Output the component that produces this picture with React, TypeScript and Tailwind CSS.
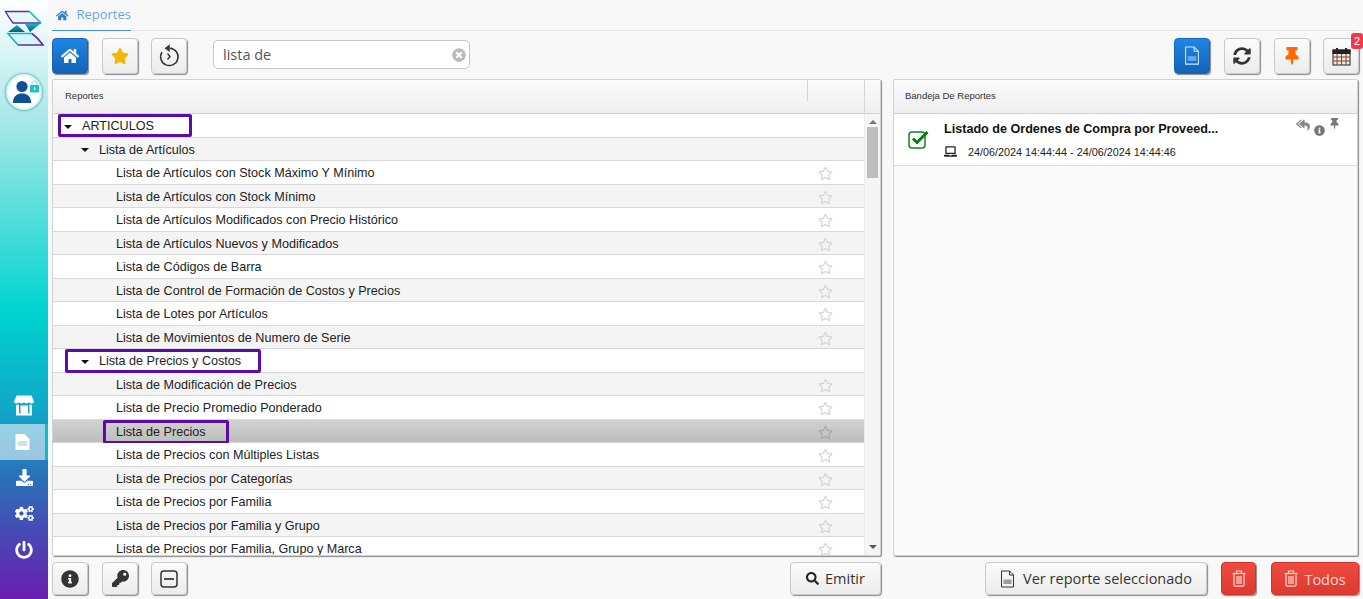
import { ReactNode } from 'react'
import {
  FaCogs,
  FaDownload,
  FaHome,
  FaInfoCircle,
  FaKey,
  FaLaptop,
  FaPowerOff,
  FaRegStar,
  FaReplyAll,
  FaSearch,
  FaStar,
  FaSyncAlt,
  FaThumbtack,
  FaTimesCircle,
} from 'react-icons/fa'

type Row = { label: string; level: 0 | 1 | 2; box?: string; selected?: boolean }

const rows: Row[] = [
  { label: 'ARTICULOS', level: 0, box: 'left-[5px] top-0 h-[23px] w-[134px]' },
  { label: 'Lista de Artículos', level: 1 },
  { label: 'Lista de Artículos con Stock Máximo Y Mínimo', level: 2 },
  { label: 'Lista de Artículos con Stock Mínimo', level: 2 },
  { label: 'Lista de Artículos Modificados con Precio Histórico', level: 2 },
  { label: 'Lista de Artículos Nuevos y Modificados', level: 2 },
  { label: 'Lista de Códigos de Barra', level: 2 },
  { label: 'Lista de Control de Formación de Costos y Precios', level: 2 },
  { label: 'Lista de Lotes por Artículos', level: 2 },
  { label: 'Lista de Movimientos de Numero de Serie', level: 2 },
  { label: 'Lista de Precios y Costos', level: 1, box: 'left-[12px] top-0 h-[24px] w-[196px]' },
  { label: 'Lista de Modificación de Precios', level: 2 },
  { label: 'Lista de Precio Promedio Ponderado', level: 2 },
  { label: 'Lista de Precios', level: 2, selected: true, box: 'left-[50px] top-0 h-[24px] w-[126px]' },
  { label: 'Lista de Precios con Múltiples Listas', level: 2 },
  { label: 'Lista de Precios por Categorías', level: 2 },
  { label: 'Lista de Precios por Familia', level: 2 },
  { label: 'Lista de Precios por Familia y Grupo', level: 2 },
  { label: 'Lista de Precios por Familia, Grupo y Marca', level: 2 },
]

function ToolButton(props: { children: ReactNode; blue?: boolean; className?: string }) {
  const look = props.blue
    ? 'border-[#1565b8] bg-gradient-to-b from-[#1f86e6] to-[#1463b6] text-white'
    : 'border-[#c9c9c9] bg-gradient-to-b from-[#fbfbfb] to-[#ececec]'
  return (
    <button
      className={`flex h-[36px] w-[36px] shrink-0 items-center justify-center rounded-[4px] border shadow-[1px_1px_1px_#8a8a8a] ${look} ${props.className ?? ''}`}
    >
      {props.children}
    </button>
  )
}

function FootButton(props: { children: ReactNode; red?: boolean; className?: string }) {
  const look = props.red
    ? 'border-[#d2332b] bg-gradient-to-b from-[#ee4a40] to-[#dc3a32] text-[#ffd9d4]'
    : 'border-[#c9c9c9] bg-gradient-to-b from-[#fbfbfb] to-[#ececec] text-[#333]'
  return (
    <button
      className={`flex h-[33px] shrink-0 items-center justify-center rounded-[4px] border font-['Open_Sans',sans-serif] text-[14.5px] shadow-[1px_1px_1px_#8a8a8a] ${look} ${props.className ?? ''}`}
    >
      {props.children}
    </button>
  )
}

function Logo() {
  return (
    <svg width="48" height="48" viewBox="0 0 48 48" fill="none">
      <defs>
        <linearGradient id="tealDark" x1="0" y1="0" x2="0" y2="1">
          <stop offset="0" stopColor="#18b4c4" />
          <stop offset="1" stopColor="#0a5a78" />
        </linearGradient>
      </defs>
      <path d="M5 11H29L41 23H13Q9 18 5 11Z" fill="#e6f9fa" />
      <path d="M41 23H13Q9 18 5.5 11.5H29" stroke="#5b2bb0" strokeWidth="1.4" />
      <path d="M29 11L41 23" stroke="#14b7c4" strokeWidth="1.6" />
      <path d="M25 24H40L30 32Z" fill="url(#tealDark)" />
      <path d="M8 32L17 25L25 32Z" fill="url(#tealDark)" />
      <path d="M8 33H32L43 45H18Z" fill="#d8f5f5" />
      <path d="M18 45L8 33.5H32" stroke="#16b3c6" strokeWidth="1.6" />
      <path d="M32 33.5Q38 38 43 45H18" stroke="#5b2bb0" strokeWidth="1.6" />
    </svg>
  )
}

function Avatar() {
  return (
    <div className="mt-[26px] flex h-[36px] w-[36px] items-center justify-center rounded-full border-[2px] border-[#d8f6f6] bg-white shadow-[0_0_3px_#2b7f8f]">
      <svg width="32" height="32" viewBox="0 0 32 32">
        <circle cx="14" cy="10.5" r="5.6" fill="#0f4f96" />
        <path d="M5 27C5 20 9 17.5 14 17.5S23 20 23 27Z" fill="#0f4f96" />
        <rect x="22" y="9" width="9" height="7.5" rx="1" fill="#1cc0c8" />
        <path d="M24 9V7.5a2.5 2.5 0 0 1 5 0V9" fill="none" stroke="#9ce4e6" strokeWidth="1.2" />
        <rect x="26" y="11.3" width="1.2" height="2.8" fill="#fff" />
      </svg>
    </div>
  )
}

function StoreIcon() {
  return (
    <svg width="20" height="21" viewBox="0 0 20 21" fill="#fff">
      <path d="M2.5 0.5H17.5L20 6.5Q20 8.5 17.5 8.5Q15 8.5 15 6.8Q15 8.5 12.5 8.5Q10 8.5 10 6.8Q10 8.5 7.5 8.5Q5 8.5 5 6.8Q5 8.5 2.5 8.5Q0 8.5 0 6.5Z" />
      <path d="M2 9.8V20.5H18V9.8H15.5V18.5H5V9.8H2ZM6.5 10.5H14V18.5H6.5Z" fillRule="evenodd" />
    </svg>
  )
}

function FileIcon(props: { size: number; className?: string }) {
  return (
    <svg
      width={props.size}
      height={props.size * 1.2}
      viewBox="0 0 15 18"
      fill="none"
      stroke="currentColor"
      strokeWidth="1"
      className={props.className}
    >
      <path d="M1.5 1H9.5L13.5 5V17H1.5Z" />
      <path d="M9.5 1V5H13.5" />
      <path d="M3.5 9.5H11.5V14H3.5Z" fill="currentColor" opacity="0.45" stroke="none" />
    </svg>
  )
}

function SideFile() {
  return (
    <svg width="15" height="16" viewBox="0 0 15 16" fill="#fff">
      <path d="M0.5 0H9.5L14.5 5V16H0.5ZM3 7.5V12H12V7.5Z" fillRule="evenodd" />
      <path d="M3 7.5H12V12H3Z" fill="#cfe3ef" />
    </svg>
  )
}

function TrashIcon() {
  return (
    <svg width="14" height="17" viewBox="0 0 14 17" fill="none" stroke="currentColor" strokeWidth="1.2">
      <path d="M0.5 3.5H13.5" />
      <path d="M4.5 3V1H9.5V3" />
      <path d="M2 3.5V15a1.2 1.2 0 0 0 1.2 1.2H10.8A1.2 1.2 0 0 0 12 15V3.5" />
      <path d="M5 6V14M7 6V14M9 6V14" />
    </svg>
  )
}

function CalendarIcon() {
  return (
    <svg width="19" height="19" viewBox="0 0 19 19" fill="none" stroke="#222" strokeWidth="1">
      <rect x="1" y="3" width="17" height="15" fill="#f3e6d8" />
      <rect x="1" y="3" width="17" height="3.5" fill="#222" />
      <path d="M1 10H18M1 14H18M5 7V18M9.5 7V18M14 7V18" stroke="#7a4a2a" />
      <path d="M5 1V5M14 1V5" strokeWidth="2" />
    </svg>
  )
}

function ClockBack() {
  return (
    <svg width="22" height="24" viewBox="0 0 22 24" fill="none" stroke="#333" strokeWidth="1.5">
      <path d="M12 4.2a8.7 8.7 0 1 1-8 4" />
      <path d="M11 1.8L7.8 4.2L11 6.6Z" fill="#333" />
      <path d="M9.5 9.5L12 12.5L9.5 15.5" strokeWidth="1.4" />
    </svg>
  )
}

function MinusBox() {
  return (
    <svg width="18" height="18" viewBox="0 0 18 18" fill="none" stroke="#333" strokeWidth="1.5">
      <rect x="1" y="1" width="16" height="16" rx="3" />
      <path d="M4 9H14" strokeWidth="1.7" />
    </svg>
  )
}

function CheckBox() {
  return (
    <svg width="22" height="20" viewBox="0 0 22 20" fill="none" className="ml-[14px] mt-[15px] shrink-0">
      <rect x="1" y="3" width="16" height="16" rx="3" stroke="#0d8a14" strokeWidth="1.5" />
      <path d="M5 9.5L9 13.5L19.5 3" stroke="#0a7d12" strokeWidth="3" />
    </svg>
  )
}

function Sidebar() {
  return (
    <aside className="flex h-full w-[48px] shrink-0 flex-col items-center bg-[linear-gradient(to_bottom,#ffffff_0%,#a8e8e8_20%,#00d4d0_52%,#10a8c8_68%,#2a6fb8_80%,#6a1db0_100%)]">
      <Logo />
      <Avatar />
      <div className="mt-auto flex w-full flex-col items-center pb-[40px] text-white">
        <div className="mb-[8px]">
          <StoreIcon />
        </div>
        <div className="flex h-[36px] w-full items-center justify-center border-r-[3px] border-[#12b9c9] bg-white/55">
          <SideFile />
        </div>
        <FaDownload className="mb-[18px] mt-[9px] text-[17px]" />
        <FaCogs className="mb-[18px] text-[19px]" />
        <FaPowerOff className="text-[18px]" />
      </div>
    </aside>
  )
}

function TreeRow({ row, odd }: { row: Row; odd: boolean }) {
  const bg = row.selected
    ? 'bg-gradient-to-b from-[#d2d2d2] to-[#bdbdbd]'
    : odd
      ? 'bg-[#f4f4f4]'
      : 'bg-white'
  const pad = row.level === 0 ? 'pl-[11px]' : row.level === 1 ? 'pl-[28px]' : 'pl-[63px]'
  return (
    <div className={`relative flex h-[23.5px] shrink-0 items-center border-b border-[#d9d9d9] pt-[3px] text-[12.6px] text-[#222] ${bg} ${pad}`}>
      {row.level < 2 && (
        <span className="mr-[10px] h-0 w-0 border-x-[4px] border-t-[4px] border-x-transparent border-t-[#111]" />
      )}
      <span>{row.label}</span>
      {row.level === 2 && (
        <FaRegStar className={`absolute left-[765px] top-[5px] text-[15px] ${row.selected ? 'text-[#aaa]' : 'text-[#d6d6d6]'}`} />
      )}
      {row.box && <span className={`absolute rounded-[2px] border-[3px] border-[#5c0ca6] ${row.box}`} />}
    </div>
  )
}

function ReportsPanel() {
  return (
    <section className="flex w-[829px] flex-col overflow-hidden rounded-[2px] border border-[#d2d2d2] bg-white shadow-[1px_1px_1px_#8a8a8a]">
      <header className="flex h-[34px] shrink-0 border-b border-[#d2d2d2] bg-gradient-to-b from-[#fbfbfb] to-[#efefef] text-[9.5px] text-[#333]">
        <div className="flex flex-1 items-center pl-[12px]">Reportes</div>
        <div className="h-[21px] w-[57px] border-l border-[#d6d6d6]" />
        <div className="w-[16px] border-l border-[#d6d6d6]" />
      </header>
      <div className="flex min-h-0 flex-1">
        <div className="flex min-w-0 flex-1 flex-col overflow-hidden">
          {rows.map((row, i) => (
            <TreeRow key={row.label} row={row} odd={i % 2 === 1} />
          ))}
        </div>
        <div className="flex w-[16px] shrink-0 flex-col items-center border-l border-[#ececec] bg-[#f5f5f5] pt-[6px]">
          <span className="h-0 w-0 border-x-[4px] border-b-[4px] border-x-transparent border-b-[#777]" />
          <span className="mt-[3px] h-[51px] w-[11px] bg-[#bdbdbd]" />
          <span className="mb-[6px] mt-auto h-0 w-0 border-x-[4px] border-t-[4px] border-x-transparent border-t-[#555]" />
        </div>
      </div>
    </section>
  )
}

function TrayPanel() {
  return (
    <section className="ml-[12px] flex w-[465px] flex-col overflow-hidden rounded-[2px] border border-[#d2d2d2] bg-[#fafafa] shadow-[1px_1px_1px_#8a8a8a]">
      <header className="flex h-[34px] shrink-0 items-center border-b border-[#d2d2d2] bg-gradient-to-b from-[#fbfbfb] to-[#efefef] pl-[11px] text-[9.5px] text-[#333]">
        Bandeja De Reportes
      </header>
      <div className="relative flex h-[52px] border-b border-[#dcdcdc] bg-white">
        <CheckBox />
        <div className="ml-[14px] flex flex-col">
          <span className="mt-[6px] text-[12.6px] font-bold text-[#111]">Listado de Ordenes de Compra por Proveed...</span>
          <span className="mt-[5px] flex items-center text-[10.8px] text-[#222]">
            <FaLaptop className="mr-[11px] text-[13px]" />
            24/06/2024 14:44:44 - 24/06/2024 14:44:46
          </span>
        </div>
        <FaReplyAll className="absolute left-[402px] top-[4px] text-[14px] text-[#8a8a8a]" />
        <FaInfoCircle className="absolute left-[420px] top-[11px] text-[11px] text-[#777]" />
        <FaThumbtack className="absolute left-[435px] top-[4px] text-[11px] text-[#777]" />
      </div>
    </section>
  )
}

export default function App() {
  return (
    <div className="flex h-[599px] w-full overflow-hidden bg-[#f8f8f8] font-['Liberation_Sans',Arial,sans-serif]">
      <Sidebar />
      <main className="flex min-w-0 flex-1 flex-col pl-[4px] pr-[4px]">
        <nav className="flex h-[31px] shrink-0 border-b border-[#e2e2e2]">
          <div className="-mb-px flex w-[79px] items-center gap-[8px] border-b border-[#4a90e2] pl-[4px] text-[#6aa5e8]">
            <FaHome className="text-[13px] text-[#2f7fd6]" />
            <span className="font-['Open_Sans',sans-serif] text-[13px]">Reportes</span>
          </div>
        </nav>
        <div className="flex h-[48px] shrink-0 items-center pt-[2px]">
          <ToolButton blue>
            <FaHome className="text-[18px]" />
          </ToolButton>
          <ToolButton className="ml-[14px]">
            <FaStar className="text-[18px] text-[#f7b500]" />
          </ToolButton>
          <ToolButton className="ml-[13px]">
            <ClockBack />
          </ToolButton>
          <div className="mb-[3px] ml-[26px] flex h-[29px] w-[257px] items-center rounded-[5px] border border-[#c6c6c6] bg-white pl-[9px] pr-[3px] font-['Open_Sans',sans-serif] text-[14.5px] text-[#555]">
            <span className="flex-1">lista de</span>
            <FaTimesCircle className="text-[14px] text-[#bbb]" />
          </div>
          <div className="ml-auto flex items-center gap-[13.5px]">
            <ToolButton blue className="mr-[0.5px]">
              <FileIcon size={16} className="text-[#cfe6ff]" />
            </ToolButton>
            <ToolButton>
              <FaSyncAlt className="text-[18px] text-[#333]" />
            </ToolButton>
            <ToolButton>
              <FaThumbtack className="text-[18px] text-[#ff6a00]" />
            </ToolButton>
            <div className="relative">
              <ToolButton>
                <CalendarIcon />
              </ToolButton>
              <span className="absolute right-[-4px] top-[-5px] flex h-[16px] w-[12px] items-center justify-center rounded-[3px] bg-[#ef3a4a] text-[11px] text-white">
                2
              </span>
            </div>
          </div>
        </div>
        <div className="flex min-h-0 flex-1">
          <ReportsPanel />
          <TrayPanel />
        </div>
        <footer className="flex h-[43px] shrink-0 items-center pb-[2px] pt-[4px]">
          <FootButton className="w-[36px]">
            <FaInfoCircle className="text-[18px]" />
          </FootButton>
          <FootButton className="ml-[14px] w-[36px]">
            <FaKey className="text-[17px]" />
          </FootButton>
          <FootButton className="ml-[13px] w-[36px]">
            <MinusBox />
          </FootButton>
          <FootButton className="ml-[603px] w-[91px] gap-[6px]">
            <FaSearch className="text-[13px] text-[#222]" />
            Emitir
          </FootButton>
          <FootButton className="ml-[104px] w-[222px] gap-[8px]">
            <FileIcon size={15} />
            Ver reporte seleccionado
          </FootButton>
          <FootButton red className="ml-[14px] w-[35px]">
            <TrashIcon />
          </FootButton>
          <FootButton red className="ml-[15px] w-[88px] gap-[6px]">
            <TrashIcon />
            <span className="mt-[2px]">Todos</span>
          </FootButton>
        </footer>
      </main>
    </div>
  )
}
